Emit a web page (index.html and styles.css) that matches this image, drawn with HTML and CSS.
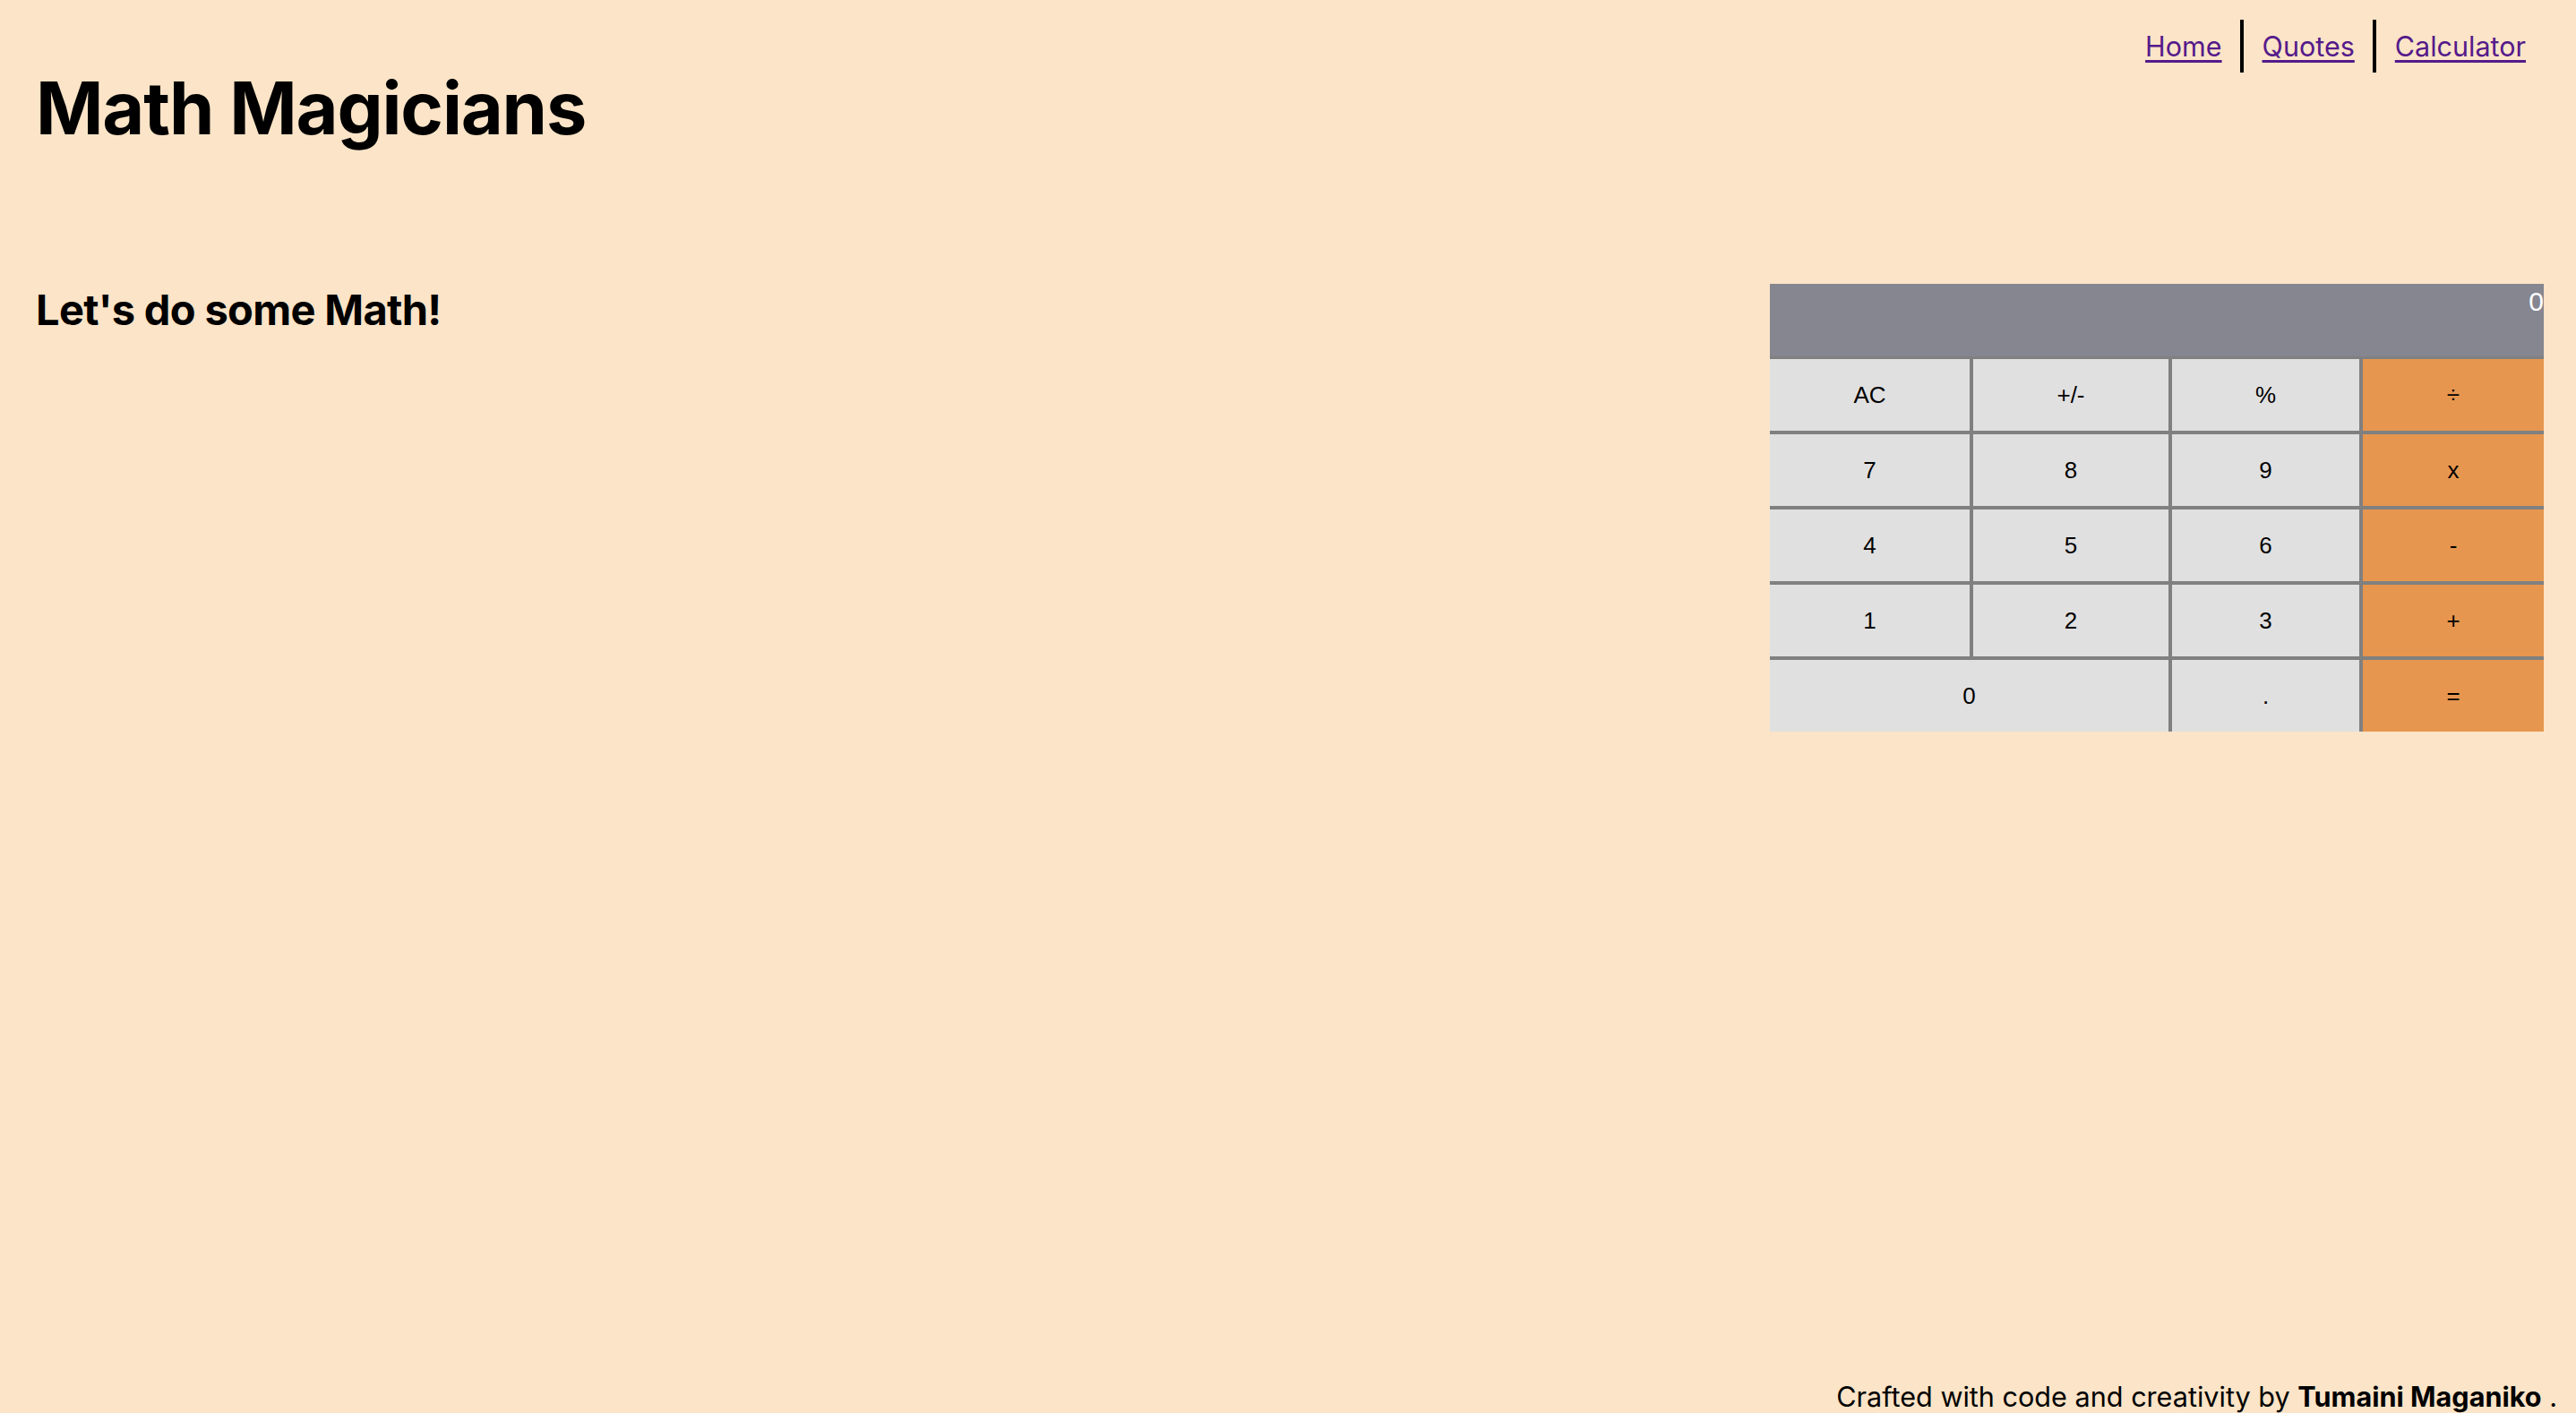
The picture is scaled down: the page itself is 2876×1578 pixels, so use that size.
FILE: index.html
```html
<!DOCTYPE html>
<html lang="en">
<head>
<meta charset="utf-8">
<title>Math Magicians</title>
<link rel="stylesheet" href="styles.css">
</head>
<body>
<div class="page">
  <header class="header">
    <h1 class="title">Math Magicians</h1>
    <nav class="nav">
      <ul class="nav-list">
        <li class="nav-item"><a class="nav-link" href="#">Home</a></li>
        <li class="nav-item nav-item-sep"><a class="nav-link" href="#">Quotes</a></li>
        <li class="nav-item nav-item-sep"><a class="nav-link" href="#">Calculator</a></li>
      </ul>
    </nav>
  </header>
  <main class="main">
    <h2 class="subtitle">Let's do some Math!</h2>
    <div class="calculator">
      <div class="display">0</div>
      <div class="keys">
        <button class="key">AC</button>
        <button class="key">+/-</button>
        <button class="key">%</button>
        <button class="key key-op">÷</button>
        <button class="key">7</button>
        <button class="key">8</button>
        <button class="key">9</button>
        <button class="key key-op">x</button>
        <button class="key">4</button>
        <button class="key">5</button>
        <button class="key">6</button>
        <button class="key key-op">-</button>
        <button class="key">1</button>
        <button class="key">2</button>
        <button class="key">3</button>
        <button class="key key-op">+</button>
        <button class="key key-zero">0</button>
        <button class="key">.</button>
        <button class="key key-op">=</button>
      </div>
    </div>
  </main>
  <footer class="footer">
    <p class="footer-text">Crafted with code and creativity by <strong class="author">Tumaini Maganiko</strong> .</p>
  </footer>
</div>
</body>
</html>
```
FILE: styles.css
```css
html, body {
  margin: 0;
  padding: 0;
}

body {
  background: #fbe4c7;
  font-family: Inter, "Noto Sans", sans-serif;
  color: #000;
}

.page {
  min-height: 100vh;
  display: flex;
  flex-direction: column;
}

.header {
  display: flex;
  justify-content: space-between;
  align-items: flex-start;
  padding: 0 36px 0 40px;
}

.title {
  margin: 72px 0 0;
  font-size: 81px;
  font-weight: 700;
  line-height: normal;
  letter-spacing: -0.014em;
}

.nav {
  margin-top: 22px;
}

.nav-list {
  list-style: none;
  margin: 0;
  padding: 0;
  display: flex;
}

.nav-item {
  padding: 11px 20px;
  font-size: 30.5px;
  line-height: normal;
}

.nav-item-sep {
  border-left: 4px solid #000;
  padding-left: 21px;
}

.nav-link {
  color: #551a8b;
  text-decoration: underline;
  text-decoration-thickness: 3px;
  text-underline-offset: 4px;
}

.main {
  display: flex;
  justify-content: space-between;
  align-items: flex-start;
  padding: 0 36px 0 40px;
  margin-top: 147px;
}

.subtitle {
  margin: 0;
  font-size: 47px;
  font-weight: 700;
  line-height: normal;
  letter-spacing: -0.014em;
}

.calculator {
  width: 864px;
  display: flex;
  flex-direction: column;
  background: #808080;
  gap: 3px;
}

.display {
  height: 81px;
  box-sizing: border-box;
  padding-top: 3px;
  background: #868690;
  color: #fff;
  text-align: right;
  font-family: "Liberation Sans", Arial, sans-serif;
  font-size: 30px;
  line-height: normal;
}

.keys {
  display: grid;
  grid-template-columns: 223px 218px 209px 202px;
  grid-auto-rows: 80px;
  gap: 4px;
}

.key {
  border: none;
  margin: 0;
  padding: 0;
  background: #e0e0e0;
  color: #000;
  font-family: "Liberation Sans", Arial, sans-serif;
  font-size: 26px;
}

.key-op {
  background: #e6964f;
}

.key-zero {
  grid-column: span 2;
}

.footer {
  margin-top: auto;
  padding: 0 21px 0 0;
  text-align: right;
}

.footer-text {
  margin: 0;
  font-size: 30.6px;
  line-height: normal;
}

.author {
  font-weight: 700;
}
```
